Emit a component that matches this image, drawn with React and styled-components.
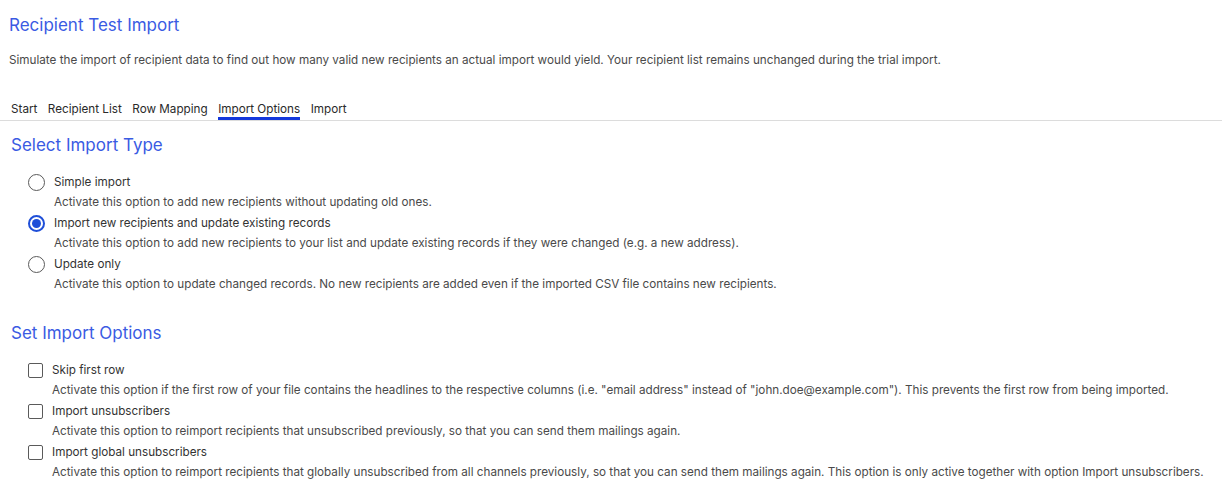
import React, { useState } from "react";
import styled, { createGlobalStyle } from "styled-components";

const GlobalStyle = createGlobalStyle`
	body {
		margin: 0;
		background: #fff;
		font-family: Inter, "Noto Sans", sans-serif;
		color: #333;
	}
	* {
		box-sizing: border-box;
	}
`;

const Page = styled.div`
	width: 100%;
	padding-bottom: 20px;
`;

const Header = styled.header`
	padding: 13px 9px 0 9px;
`;

const Title = styled.h1`
	margin: 0;
	font-size: 17px;
	line-height: 24px;
	font-weight: 400;
	color: #3a5be3;
`;

const Lead = styled.p`
	margin: 15px 0 0 0;
	font-size: 11.7px;
	line-height: 16px;
	color: #4a4a4a;
`;

const TabBar = styled.nav`
	margin-top: 33px;
	padding: 0 11px;
	display: flex;
	gap: 10.5px;
	border-bottom: 1px solid #dcdcdc;
`;

const Tab = styled.span`
	font-size: 11.7px;
	line-height: 16px;
	color: #2a2a2a;
	border-bottom: 3px solid ${(p) => (p.$active ? "#1438dc" : "transparent")};
	cursor: pointer;
`;

const Section = styled.section`
	padding: 0 11px;
	margin-top: ${(p) => p.$top}px;
`;

const SectionTitle = styled.h2`
	margin: 0;
	font-size: 17px;
	line-height: 24px;
	font-weight: 400;
	color: #3a5be3;
`;

const OptionList = styled.div`
	margin-top: 15px;
	padding-left: 17px;
	display: flex;
	flex-direction: column;
`;

const Option = styled.label`
	display: grid;
	grid-template-columns: ${(p) => (p.$radio ? "17px" : "15px")} 1fr;
	column-gap: 9px;
	align-items: center;
	cursor: pointer;
`;

const OptionLabel = styled.span`
	font-size: 11.7px;
	line-height: 20px;
	color: #333;
`;

const OptionHint = styled.span`
	grid-column: 2;
	font-size: 11.7px;
	line-height: 21px;
	color: #4a4a4a;
`;

const Radio = styled.input.attrs({ type: "radio" })`
	appearance: none;
	margin: 0;
	width: 17px;
	height: 17px;
	border-radius: 50%;
	border: 1.5px solid #5a5a5a;
	background: #fff;
	display: grid;
	place-items: center;
	cursor: pointer;

	&:checked {
		border: 2px solid #1f4fd8;
	}
	&:checked::after {
		content: "";
		width: 9px;
		height: 9px;
		border-radius: 50%;
		background: #1f4fd8;
	}
`;

const Checkbox = styled.input.attrs({ type: "checkbox" })`
	appearance: none;
	margin: 0;
	width: 15px;
	height: 15px;
	border-radius: 2px;
	border: 1.5px solid #5a5a5a;
	background: #fff;
	cursor: pointer;

	&:checked {
		background: #1f4fd8;
		border-color: #1f4fd8;
	}
`;

const tabs = ["Start", "Recipient List", "Row Mapping", "Import Options", "Import"];

const importTypes = [
	{
		id: "simple",
		label: "Simple import",
		hint: "Activate this option to add new recipients without updating old ones.",
	},
	{
		id: "update-existing",
		label: "Import new recipients and update existing records",
		hint: "Activate this option to add new recipients to your list and update existing records if they were changed (e.g. a new address).",
	},
	{
		id: "update-only",
		label: "Update only",
		hint: "Activate this option to update changed records. No new recipients are added even if the imported CSV file contains new recipients.",
	},
];

const importOptions = [
	{
		id: "skip-first",
		label: "Skip first row",
		hint: 'Activate this option if the first row of your file contains the headlines to the respective columns (i.e. "email address" instead of "john.doe@example.com"). This prevents the first row from being imported.',
	},
	{
		id: "unsubscribers",
		label: "Import unsubscribers",
		hint: "Activate this option to reimport recipients that unsubscribed previously, so that you can send them mailings again.",
	},
	{
		id: "global-unsubscribers",
		label: "Import global unsubscribers",
		hint: "Activate this option to reimport recipients that globally unsubscribed from all channels previously, so that you can send them mailings again. This option is only active together with option Import unsubscribers.",
	},
];

export default function App() {
	const [type, setType] = useState("update-existing");
	const [flags, setFlags] = useState({});

	return (
		<Page>
			<GlobalStyle />
			<Header>
				<Title>Recipient Test Import</Title>
				<Lead>
					Simulate the import of recipient data to find out how many valid new recipients an actual import
					would yield. Your recipient list remains unchanged during the trial import.
				</Lead>
			</Header>

			<TabBar>
				{tabs.map((t) => (
					<Tab key={t} $active={t === "Import Options"}>
						{t}
					</Tab>
				))}
			</TabBar>

			<Section $top={12}>
				<SectionTitle>Select Import Type</SectionTitle>
				<OptionList>
					{importTypes.map((o) => (
						<Option key={o.id} $radio>
							<Radio
								name="importType"
								checked={type === o.id}
								onChange={() => setType(o.id)}
							/>
							<OptionLabel>{o.label}</OptionLabel>
							<OptionHint>{o.hint}</OptionHint>
						</Option>
					))}
				</OptionList>
			</Section>

			<Section $top={26}>
				<SectionTitle>Set Import Options</SectionTitle>
				<OptionList>
					{importOptions.map((o) => (
						<Option key={o.id}>
							<Checkbox
								checked={!!flags[o.id]}
								onChange={() => setFlags({ ...flags, [o.id]: !flags[o.id] })}
							/>
							<OptionLabel>{o.label}</OptionLabel>
							<OptionHint>{o.hint}</OptionHint>
						</Option>
					))}
				</OptionList>
			</Section>
		</Page>
	);
}
